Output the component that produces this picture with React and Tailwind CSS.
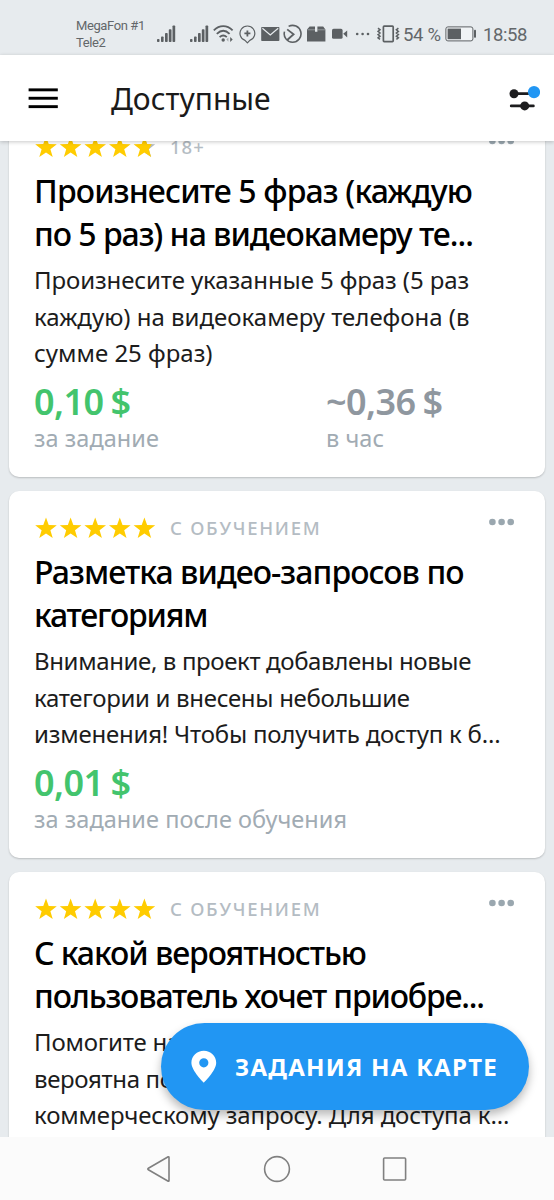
import React from "react";

const tasks = [
  {
    id: 1,
    badge: "18+",
    badgeClass: "tracking-[1px]",
    half: true,
    title: [
      { text: "Произнесите 5 фраз (каждую", cls: "tracking-[-0.86px]" },
      { text: "по 5 раз) на видеокамеру те...", cls: "tracking-[-1.02px]" },
    ],
    description: [
      { text: "Произнесите указанные 5 фраз (5 раз", cls: "tracking-[-0.1px]" },
      { text: "каждую) на видеокамеру телефона (в", cls: "" },
      { text: "сумме 25 фраз)", cls: "" },
    ],
    price: "0,10 $",
    priceLabel: "за задание",
    hourly: "~0,36 $",
  },
  {
    id: 2,
    badge: "С ОБУЧЕНИЕМ",
    badgeClass: "tracking-[1.75px]",
    title: [
      { text: "Разметка видео-запросов по", cls: "tracking-[-0.94px]" },
      { text: "категориям", cls: "tracking-[-1.2px]" },
    ],
    description: [
      { text: "Внимание, в проект добавлены новые", cls: "tracking-[-0.37px]" },
      { text: "категории и внесены небольшие", cls: "tracking-[-0.31px]" },
      { text: "изменения! Чтобы получить доступ к б...", cls: "tracking-[-0.21px]" },
    ],
    price: "0,01 $",
    priceLabel: "за задание после обучения",
  },
  {
    id: 3,
    badge: "С ОБУЧЕНИЕМ",
    badgeClass: "tracking-[1.75px]",
    title: [
      { text: "С какой вероятностью", cls: "tracking-[-1.05px]" },
      { text: "пользователь хочет приобре...", cls: "tracking-[-1.17px]" },
    ],
    description: [
      { text: "Помогите на", cls: "tracking-[-0.2px]" },
      { text: "вероятна по", cls: "tracking-[-0.35px]" },
      { text: "коммерческому запросу. Для доступа к...", cls: "tracking-[-0.13px]" },
    ],
  },
];

const Signal = ({ className }) => (
  <svg width="19" height="18" viewBox="0 0 19 18" fill="#5c6063" className={className}>
    <rect x="0" y="14" width="2.5" height="3" rx="0.8" />
    <rect x="4" y="11.5" width="2.6" height="5.5" rx="0.8" />
    <rect x="8" y="8" width="2.7" height="9" rx="0.8" />
    <rect x="11.8" y="4.2" width="2.7" height="12.8" rx="0.8" />
    <rect x="15.5" y="0.5" width="2.7" height="16.5" rx="0.8" />
  </svg>
);

const StatusBar = () => (
  <div className="h-[55px] shrink-0 bg-[#e7ebee] flex items-center pt-[13px] text-[#63676a] font-['Roboto',sans-serif]">
    <div className="ml-[76px] w-[81px] text-[13px] leading-[17px] tracking-[-0.4px] whitespace-nowrap">
      <div>MegaFon #1</div>
      <div>Tele2</div>
    </div>
    <Signal />
    <Signal className="ml-[14px]" />
    {/* wifi */}
    <svg width="22" height="18" viewBox="0 0 22 18" fill="none" stroke="#5c6063" strokeWidth="1.8" className="ml-1">
      <path d="M0.8 5.4C6.5 -0.2 14 -0.2 19.6 5.4" />
      <path d="M3.8 8.9C7.8 5 12.6 5 16.6 8.9" />
      <path d="M6.6 12.2C8.8 10.1 11.6 10.1 13.8 12.2" />
      <circle cx="10.2" cy="15" r="1.7" fill="#5c6063" stroke="none" />
      <path d="M15.4 12.4v4.4l-2-2.2z" fill="#a6abae" stroke="none" />
      <path d="M17.2 12v5l2.5-2.5z" fill="#5c6063" stroke="none" />
    </svg>
    {/* bubble with plus */}
    <svg width="17" height="20" viewBox="0 0 17 20" fill="none" stroke="#5c6063" strokeWidth="1.2" className="ml-1">
      <path d="M6 16.4A7.4 7.4 0 1 1 10.8 16.4L8.4 18.8Z" strokeLinejoin="round" />
      <path d="M8.4 6.4v6M5.4 9.4h6" strokeWidth="1.8" />
    </svg>
    {/* mail */}
    <svg width="19" height="16" viewBox="0 0 19 16" className="ml-[5px]">
      <rect x="0.2" y="1" width="18.2" height="14" rx="0.8" fill="#5c6063" />
      <path d="M1.4 2.2L9.3 9l7.9-6.8" fill="none" stroke="#e7ebee" strokeWidth="1.2" />
    </svg>
    {/* circle with arrow */}
    <svg width="19" height="20" viewBox="0 0 19 20" fill="none" stroke="#5c6063" strokeWidth="1.6" className="ml-[3px]">
      <path d="M5.6 2.4A8.4 8.4 0 1 1 1.5 7.6" />
      <path d="M4.2 5.4L10.6 10.2L4.2 16" strokeWidth="1.8" />
    </svg>
    {/* package */}
    <svg width="19" height="18" viewBox="0 0 19 18" fill="#5c6063" className="ml-[5px]">
      <path d="M2.6 1.4H8V6.8h2.4V1.4h5.8L18.4 4.6V16.4H0V4.6Z" />
      <path d="M0.5 4.8H8M10.4 4.8H18" stroke="#b9bdc0" strokeWidth="0.6" />
    </svg>
    {/* video */}
    <svg width="16" height="12" viewBox="0 0 16 12" fill="#5c6063" className="ml-[6px]">
      <rect x="0" y="0.8" width="10.6" height="10" rx="1.6" />
      <path d="M11.2 5.8L15.2 2.4V9.4Z" />
    </svg>
    <svg width="15" height="4" viewBox="0 0 15 4" fill="#5c6063" className="ml-[7px]">
      <circle cx="2.2" cy="2" r="1.3" />
      <circle cx="7.6" cy="2" r="1.3" />
      <circle cx="13" cy="2" r="1.3" />
    </svg>
    {/* vibrate */}
    <svg width="23" height="18" viewBox="0 0 23 18" fill="none" stroke="#5c6063" strokeWidth="1.5" className="ml-[7px]">
      <rect x="6.4" y="1.2" width="9.8" height="15.4" rx="0.8" strokeWidth="1.7" />
      <path d="M1 3.2l2 1.6-2 1.6 2 1.6-2 1.6 2 1.6-2 1.6 2 1.6" />
      <path d="M21.4 3.2l-2 1.6 2 1.6-2 1.6 2 1.6-2 1.6 2 1.6-2 1.6" />
    </svg>
    <span className="ml-[3px] w-[42px] pt-[2px] text-[18.5px] leading-5 tracking-[-0.3px] whitespace-nowrap">54 %</span>
    {/* battery */}
    <svg width="32" height="16" viewBox="0 0 32 16">
      <rect x="0.9" y="0.9" width="27" height="14" rx="2" fill="#f0f3f5" stroke="#5c6063" strokeWidth="1" />
      <rect x="2.6" y="2.6" width="13.4" height="10.6" fill="#5c6063" />
      <rect x="29" y="3.8" width="2" height="8" rx="0.8" fill="#5c6063" />
    </svg>
    <span className="ml-[6px] pt-[2px] text-[18.5px] leading-5 tracking-[-0.4px] whitespace-nowrap">18:58</span>
  </div>
);

const Header = () => (
  <div className="h-[86px] shrink-0 bg-white flex items-center shadow-[0_1px_4px_rgba(0,0,0,0.22)] relative z-10">
    <svg width="30" height="21" viewBox="0 0 30 21" className="ml-7" fill="#000">
      <rect x="0.6" y="0.4" width="29.2" height="2.9" />
      <rect x="0.6" y="8.8" width="29.2" height="2.9" />
      <rect x="0.6" y="17.2" width="29.2" height="2.9" />
    </svg>
    <h1 className="ml-[53px] pt-[2px] text-[30px] leading-10 text-[#1a1a1a]">Доступные</h1>
    {/* filter with a dot for active filters */}
    <svg width="32" height="26" viewBox="0 0 32 26" className="ml-auto mr-[14px]">
      <path d="M5 8.7H20M3.2 20.9H25.4" stroke="#1c1c1e" strokeWidth="2.7" strokeLinecap="round" />
      <circle cx="6" cy="8.7" r="4.5" fill="#1c1c1e" />
      <circle cx="16.7" cy="20.9" r="4.5" fill="#1c1c1e" />
      <circle cx="26" cy="7.1" r="6.1" fill="#2196f3" />
    </svg>
  </div>
);

const Stars = ({ half }) => (
  <svg width="124" height="24" viewBox="0 0 124 24">
    {[0, 1, 2, 3, 4].map((i) => (
      <g key={i} transform={`translate(${i * 24.6 + 12} 13.6) scale(1.05)`}>
        {half && i === 4 && (
          <path d="M0 -10.6L2.6 -3.4L10.3 -3.2L4.2 1.5L6.4 8.9L0 4.6Z" fill="#b4bbc1" />
        )}
        <path
          d={
            half && i === 4
              ? "M0 -10.6L2.6 -3.4L7 -3.2L4.2 1.5L6.4 8.9L0 4.6L-6.4 8.9L-4.2 1.5L-10.3 -3.2L-2.6 -3.4Z"
              : "M0 -10.6L2.6 -3.4L10.3 -3.2L4.2 1.5L6.4 8.9L0 4.6L-6.4 8.9L-4.2 1.5L-10.3 -3.2L-2.6 -3.4Z"
          }
          fill="#ffcc00"
        />
      </g>
    ))}
  </svg>
);

const Price = ({ value, label, className }) => (
  <div>
    <div className={`text-[36px] leading-[42px] font-semibold tracking-[-0.55px] [word-spacing:-2px] ${className}`}>
      {value}
    </div>
    <div className="mt-[-1px] text-[23.5px] leading-8 tracking-[0.05px] text-[#a1abb3]">{label}</div>
  </div>
);

const TaskCard = ({ task }) => (
  <div className="h-[367px] shrink-0 bg-white rounded-[10px] px-[25px] pt-[25px] shadow-[0_1px_2px_rgba(0,0,0,0.2)] whitespace-nowrap">
    <div className="flex items-center h-[22px]">
      <Stars half={task.half} />
      <span className={`ml-3 pt-px text-[18.5px] leading-[22px] font-medium text-[#b4bcc3] ${task.badgeClass}`}>
        {task.badge}
      </span>
      <svg width="26" height="8" viewBox="0 0 26 8" fill="#9aa7af" className="ml-auto mr-[6px] mb-[11px]">
        <circle cx="4.4" cy="4" r="3.3" />
        <circle cx="13.6" cy="4" r="3.3" />
        <circle cx="22.7" cy="4" r="3.3" />
      </svg>
    </div>
    <h2 className="mt-[12px] text-[32px] leading-[43px] font-medium text-black">
      {task.title.map((l) => (
        <div key={l.text} className={l.cls}>{l.text}</div>
      ))}
    </h2>
    <div className="mt-[7px] text-[24px] leading-[36.5px] text-[#1c1c1c]">
      {task.description.map((l) => (
        <div key={l.text} className={l.cls}>{l.text}</div>
      ))}
    </div>
    {task.price && (
      <div className="mt-[9px] flex">
        <div className="w-[292px]">
          <Price value={task.price} label={task.priceLabel} className="text-[#43c46d]" />
        </div>
        {task.hourly && <Price value={task.hourly} label="в час" className="text-[#8f979f]" />}
      </div>
    )}
  </div>
);

const NavBar = () => (
  <div className="h-[63px] shrink-0 bg-[#fbfbfb] relative z-10 flex items-center">
    <svg width="26" height="28" viewBox="0 0 26 28" fill="none" stroke="#808080" strokeWidth="1.6" className="ml-[146px]">
      <path d="M22.2 1.8L2.4 13.2Q1.2 14 2.4 14.8L22.2 26.2Q23 26.6 23 25.4V2.6Q23 1.4 22.2 1.8Z" />
    </svg>
    <svg width="28" height="28" viewBox="0 0 28 28" fill="none" stroke="#808080" strokeWidth="1.6" className="ml-[91px]">
      <circle cx="14" cy="14" r="12.4" />
    </svg>
    <svg width="26" height="26" viewBox="0 0 26 26" fill="none" stroke="#808080" strokeWidth="1.6" className="ml-[91px]">
      <rect x="1.6" y="2" width="22" height="22" rx="1" />
    </svg>
  </div>
);

const App = () => {
  return (
    <div className="w-[554px] h-[1200px] flex flex-col overflow-hidden bg-[#e7ebee] relative font-['Noto_Sans',sans-serif]">
      <StatusBar />
      <Header />
      {/* Task list, scrolled a little below the first card's top */}
      <div className="flex-1 min-h-0 overflow-hidden px-[9px]">
        <div className="-mt-[31px] flex flex-col gap-[14px]">
          {tasks.map((task) => (
            <TaskCard key={task.id} task={task} />
          ))}
        </div>
      </div>
      <NavBar />

      {/* Floating map button */}
      <button className="absolute left-[161px] top-[1023px] z-20 w-[368px] h-[87px] rounded-full bg-[#2196f3] text-white flex items-center shadow-[0_5px_10px_rgba(0,0,0,0.28)]">
        <svg width="26" height="34" viewBox="0 0 26 34" className="ml-[30px]">
          <path
            d="M12.8 0.8C6 0.8 0.4 6 0.4 12.8C0.4 20.8 12.8 32.8 12.8 32.8S25.2 20.8 25.2 12.8C25.2 6 19.6 0.8 12.8 0.8ZM12.8 8.2A4.6 4.6 0 1 1 12.8 17.4A4.6 4.6 0 0 1 12.8 8.2Z"
            fill="#fff"
            fillRule="evenodd"
          />
        </svg>
        <span className="ml-[18px] text-[24px] font-bold tracking-[1.25px] whitespace-nowrap">ЗАДАНИЯ НА КАРТЕ</span>
      </button>
    </div>
  );
};

export default App;
